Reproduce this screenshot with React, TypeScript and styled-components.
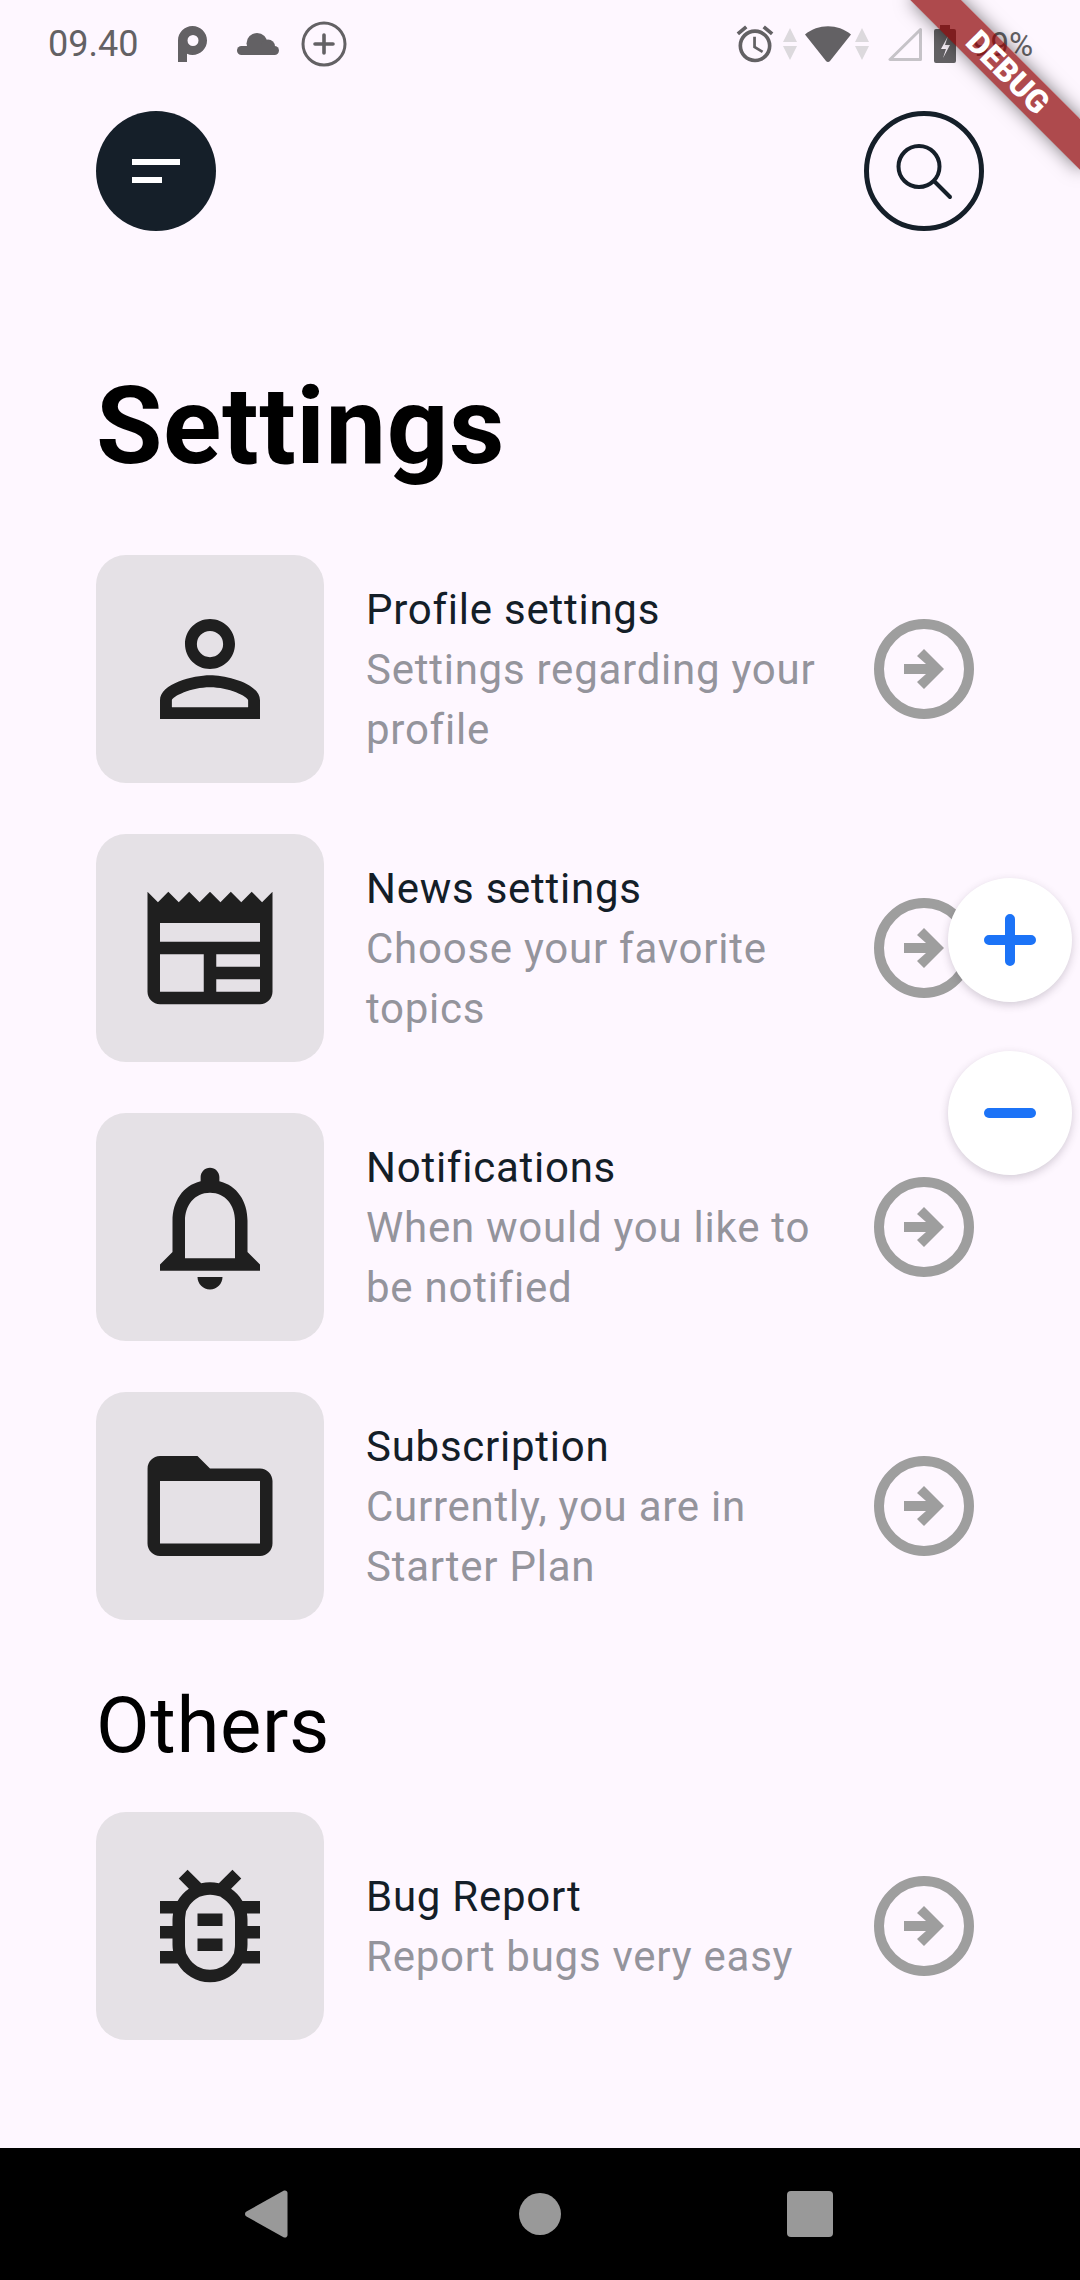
import React from "react";
import styled, { createGlobalStyle } from "styled-components";
import {
  MdAccessAlarm,
  MdFolderOpen,
  MdOutlineBugReport,
  MdOutlineNewspaper,
  MdNotificationsNone,
  MdPersonOutline,
} from "react-icons/md";

const Global = createGlobalStyle`
  html, body { margin: 0; padding: 0; background: #fef7ff; }
  * { box-sizing: border-box; }
`;

const Page = styled.div`
  position: relative;
  width: 1080px;
  height: 2280px;
  overflow: hidden;
  display: flex;
  flex-direction: column;
  background: #fef7ff;
  font-family: Roboto, "Liberation Sans", sans-serif;
`;

const StatusBar = styled.div`
  height: 88px;
  display: flex;
  align-items: center;
  padding: 0 48px 0 48px;
  color: #636164;
  font-size: 36px;
`;

const Time = styled.span`
  width: 130px;
`;

const StatusLeft = styled.div`
  display: flex;
  align-items: center;
  gap: 30px;
`;

const StatusRight = styled.div`
  margin-left: auto;
  display: flex;
  align-items: center;
`;

const StatusSlot = styled.span<{ $ml: number }>`
  display: flex;
  margin-left: ${(p) => p.$ml}px;
`;

const Header = styled.div`
  margin-top: 23px;
  padding: 0 96px;
  display: flex;
  justify-content: space-between;
`;

const MenuButton = styled.div`
  width: 120px;
  height: 120px;
  border-radius: 50%;
  background: #151f29;
  display: flex;
  flex-direction: column;
  justify-content: center;
  padding-left: 36px;
  gap: 12px;
`;

const MenuBar = styled.div<{ $w: number }>`
  width: ${(p) => p.$w}px;
  height: 6px;
  background: #fff;
`;

const SearchButton = styled.div`
  width: 120px;
  height: 120px;
  border-radius: 50%;
  border: 5px solid #151f29;
  display: flex;
  align-items: center;
  justify-content: center;
`;

const Content = styled.main`
  flex: 1;
  padding: 0 96px;
`;

const Heading = styled.h1`
  margin: 135px 0 69px;
  font-size: 108px;
  line-height: 120px;
  letter-spacing: 0.6px;
  font-weight: 700;
  color: #000;
`;

const Rows = styled.div`
  display: flex;
  flex-direction: column;
  gap: 51px;
`;

const Row = styled.div`
  display: flex;
  align-items: center;
  height: 228px;
  padding-right: 10px;
`;

const IconTile = styled.div`
  width: 228px;
  height: 228px;
  flex: none;
  border-radius: 30px;
  background: #e5e1e6;
  color: #1f1f1f;
  display: flex;
  align-items: center;
  justify-content: center;
`;

const RowText = styled.div`
  flex: 1;
  margin-left: 42px;
  padding: 2px 20px 0 0;
  line-height: 60px;
`;

const RowTitle = styled.div`
  font-size: 42px;
  letter-spacing: 0.75px;
  color: #141e28;
`;

const RowSub = styled.div`
  font-size: 42px;
  letter-spacing: 0.75px;
  color: #94949c;
`;

const ArrowCircle = styled.div`
  width: 100px;
  height: 100px;
  flex: none;
  border-radius: 50%;
  border: 10px solid #9e9e9e;
  display: flex;
  align-items: center;
  justify-content: center;
`;

const SectionTitle = styled.h2`
  margin: 64px 0 44px;
  font-size: 78px;
  line-height: 84px;
  letter-spacing: 0.6px;
  font-weight: 400;
  color: #000;
`;

const NavBar = styled.nav`
  height: 132px;
  flex: none;
  background: #000;
  padding: 0 135px;
  display: grid;
  grid-template-columns: repeat(3, 270px);
  align-items: center;
  justify-items: center;
`;

const Fabs = styled.div`
  position: absolute;
  top: 878px;
  left: 948px;
  display: flex;
  flex-direction: column;
  gap: 49px;
`;

const Fab = styled.div`
  width: 124px;
  height: 124px;
  border-radius: 50%;
  background: #fff;
  display: flex;
  align-items: center;
  justify-content: center;
  box-shadow: 0 3px 8px rgba(60, 50, 70, 0.22);
`;

const Ribbon = styled.div`
  position: absolute;
  left: 960px;
  top: 84px;
  width: 240px;
  height: 36px;
  transform-origin: 120px -84px;
  transform: rotate(45deg);
  background: rgba(140, 0, 2, 0.7);
  box-shadow: 0 0 18px rgba(0, 0, 0, 0.5);
  color: #fff;
  font-size: 32px;
  font-weight: 900;
  line-height: 36px;
  text-align: center;
`;

const Percent = styled.span`
  margin-left: 16px;
  width: 60px;
  font-size: 33px;
`;

const Pocket = () => (
  <svg width="29" height="36" viewBox="0 0 29 36" fill="#636164">
    <path
      fillRule="evenodd"
      d="M0 36V14.5C0 6.5 6.5 0 14.5 0S29 6.5 29 14.5 22.5 29 14.5 29c-2 0-3.7-.4-5.5-1.2V36ZM15 9a5.5 5.5 0 1 0 0 11 5.5 5.5 0 0 0 0-11Z"
    />
  </svg>
);

const Cloud = () => (
  <svg width="42" height="22" viewBox="0 0 42 22" fill="#636164">
    <circle cx="20" cy="10.5" r="10.5" />
    <circle cx="31" cy="13.5" r="7" />
    <rect x="0" y="13" width="42" height="9" rx="4.5" />
  </svg>
);

const PlusRing = () => (
  <svg width="46" height="46" viewBox="0 0 46 46" fill="none" stroke="#636164" style={{ marginLeft: -8 }}>
    <circle cx="23" cy="23" r="21" strokeWidth="3" />
    <path d="M23 14v18M14 23h18" strokeWidth="3.6" strokeLinecap="round" />
  </svg>
);

const DataArrows = () => (
  <svg width="14" height="32" viewBox="0 0 14 32" fill="#dcd9dd">
    <path d="M7 0l7 14H0ZM0 18h14L7 32Z" />
  </svg>
);

const Wifi = () => (
  <svg width="46" height="36" viewBox="0 0 46 36" fill="#636164">
    <path d="M0 8.5C13-2.5 33-2.5 46 8.5L25 35c-1 1.3-3 1.3-4 0Z" />
  </svg>
);

const Cell = () => (
  <svg width="34" height="34" viewBox="0 0 34 34" fill="none" stroke="#c6c3c8" strokeWidth="3">
    <path d="M2 32.5h30.500V2.500Z" strokeLinejoin="round" />
  </svg>
);

const Battery = () => (
  <svg width="22" height="38" viewBox="0 0 22 38" fill="#636164">
    <path d="M6 0h10v4h4a2 2 0 0 1 2 2v30a2 2 0 0 1-2 2H2a2 2 0 0 1-2-2V6a2 2 0 0 1 2-2h4Z" />
    <path d="M14 11l-7 13h5l-3 9 7-13h-5Z" fill="#fef7ff" />
  </svg>
);

const SearchGlyph = () => (
  <svg width="110" height="110" viewBox="5 5 110 110" fill="none" stroke="#151f29" strokeWidth="4" strokeLinecap="round">
    <circle cx="55" cy="55.500" r="20.500" />
    <path d="M71 71l15 15" />
  </svg>
);

const Arrow = () => (
  <svg width="40" height="40" viewBox="0 0 40 40" fill="#9e9e9e">
    <path d="M0 15H22L13 7 20 0 40 20 20 40 13 33 22 25H0Z" />
  </svg>
);

const PlusGlyph = () => (
  <svg width="52" height="52" viewBox="0 0 52 52" stroke="#1c73f7" strokeWidth="10" strokeLinecap="round">
    <path d="M5 26H47M26 5V47" />
  </svg>
);

const MinusGlyph = () => (
  <svg width="52" height="52" viewBox="0 0 52 52" stroke="#1c73f7" strokeWidth="10" strokeLinecap="round">
    <path d="M5 26H47" />
  </svg>
);

const Back = () => (
  <svg width="44" height="48" viewBox="0 0 44 48" fill="#999" style={{ marginRight: 6 }}>
    <path d="M1.500 21.500 38.500.8C40.500-.300 42.500 1 42.500 3v42c0 2-2 3.300-4 2.200L1.500 26.500c-2-1.200-2-3.800 0-5Z" />
  </svg>
);

const Home = () => (
  <svg width="42" height="42" viewBox="0 0 42 42" fill="#999">
    <circle cx="21" cy="21" r="21" />
  </svg>
);

const Recents = () => (
  <svg width="46" height="46" viewBox="0 0 46 46" fill="#999">
    <rect width="46" height="46" rx="4" />
  </svg>
);

const Item = ({ icon, title, sub }: { icon: React.ReactNode; title: string; sub: string }) => (
  <Row>
    <IconTile>{icon}</IconTile>
    <RowText>
      <RowTitle>{title}</RowTitle>
      <RowSub>{sub}</RowSub>
    </RowText>
    <ArrowCircle>
      <Arrow />
    </ArrowCircle>
  </Row>
);

export default function App() {
  return (
    <Page>
      <Global />
      <StatusBar>
        <Time>09.40</Time>
        <StatusLeft>
          <Pocket />
          <Cloud />
          <PlusRing />
        </StatusLeft>
        <StatusRight>
          <MdAccessAlarm size={44} color="#636164" />
          <StatusSlot $ml={6}>
            <DataArrows />
          </StatusSlot>
          <StatusSlot $ml={8}>
            <Wifi />
          </StatusSlot>
          <StatusSlot $ml={4}>
            <DataArrows />
          </StatusSlot>
          <StatusSlot $ml={19}>
            <Cell />
          </StatusSlot>
          <StatusSlot $ml={12}>
            <Battery />
          </StatusSlot>
          <Percent>99%</Percent>
        </StatusRight>
      </StatusBar>
      <Header>
        <MenuButton>
          <MenuBar $w={48} />
          <MenuBar $w={30} />
        </MenuButton>
        <SearchButton>
          <SearchGlyph />
        </SearchButton>
      </Header>
      <Content>
        <Heading>Settings</Heading>
        <Rows>
          <Item icon={<MdPersonOutline size={150} />} title="Profile settings" sub="Settings regarding your profile" />
          <Item icon={<MdOutlineNewspaper size={150} />} title="News settings" sub="Choose your favorite topics" />
          <Item icon={<MdNotificationsNone size={150} />} title="Notifications" sub="When would you like to be notified" />
          <Item icon={<MdFolderOpen size={150} />} title="Subscription" sub="Currently, you are in Starter Plan" />
        </Rows>
        <SectionTitle>Others</SectionTitle>
        <Item icon={<MdOutlineBugReport size={150} />} title="Bug Report" sub="Report bugs very easy" />
      </Content>
      <NavBar>
        <Back />
        <Home />
        <Recents />
      </NavBar>
      <Fabs>
        <Fab>
          <PlusGlyph />
        </Fab>
        <Fab>
          <MinusGlyph />
        </Fab>
      </Fabs>
      <Ribbon>DEBUG</Ribbon>
    </Page>
  );
}
